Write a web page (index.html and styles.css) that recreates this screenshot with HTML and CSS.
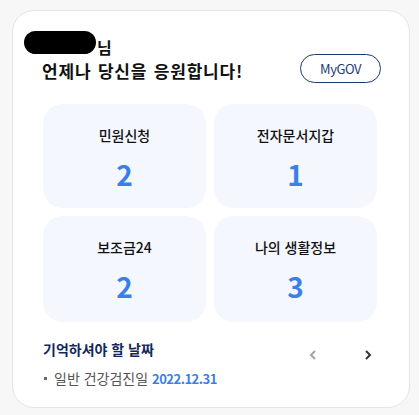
FILE: index.html
```html
<!DOCTYPE html>
<html lang="ko">
<head>
    <meta charset="UTF-8">
    <meta name="viewport" content="width=device-width, initial-scale=1.0">
    <title>나의 정부24</title>
    <link rel="stylesheet" href="styles.css">
</head>
<body>
    <div class="card">
        <!-- greeting and MyGOV link -->
        <div class="greet">
            <div class="greet-text">
                <p class="name"><span class="hidden-name"></span>님</p>
                <p class="cheer">언제나 당신을 응원합니다!</p>
            </div>
            <a class="mygov" href="#">MyGOV</a>
        </div>

        <!-- summary tiles -->
        <div class="tiles">
            <a class="tile" href="#"><span class="tile-label">민원신청</span><span class="tile-num">2</span></a>
            <a class="tile" href="#"><span class="tile-label">전자문서지갑</span><span class="tile-num">1</span></a>
            <a class="tile" href="#"><span class="tile-label">보조금24</span><span class="tile-num">2</span></a>
            <a class="tile" href="#"><span class="tile-label">나의 생활정보</span><span class="tile-num">3</span></a>
        </div>

        <!-- dates to remember -->
        <div class="remember">
            <div class="remember-text">
                <h2>기억하셔야 할 날짜</h2>
                <p class="item"><span class="dot"></span>일반 건강검진일 <b>2022.12.31</b></p>
            </div>
            <div class="arrows">
                <button class="arrow prev" type="button">
                    <svg width="8" height="10" viewBox="0 0 8 10"><path d="M6 1 L2 5 L6 9" fill="none" stroke="#a3a3a3" stroke-width="2"/></svg>
                </button>
                <button class="arrow next" type="button">
                    <svg width="8" height="10" viewBox="0 0 8 10"><path d="M2 1 L6 5 L2 9" fill="none" stroke="#333" stroke-width="2"/></svg>
                </button>
            </div>
        </div>
    </div>
</body>
</html>
```

FILE: styles.css
```css
body {
    margin: 0;
    background-color: #f7f7f8;
    font-family: "Noto Sans CJK KR", "Noto Sans", sans-serif;
    color: #111;
}
p, h2 {
    margin: 0;
}
.card {
    box-sizing: border-box;
    width: 398px;
    height: 398px;
    margin: 10px 0 0 12px;
    padding: 26px 28px 0 29px;
    background: #fff;
    border: 1px solid #e2e4ec;
    border-radius: 22px;
}
.greet {
    display: flex;
    justify-content: space-between;
    align-items: flex-end;
}
.name {
    height: 20px;
    font-size: 16px;
    font-weight: bold;
    line-height: 20px;
    margin-left: -18px;
}
.hidden-name {
    display: inline-block;
    width: 72px;
    height: 23px;
    background: #000;
    border-radius: 12px;
    vertical-align: 0;
    margin: -6px 1px 0 0;
}
.cheer {
    font-size: 17px;
    font-weight: bold;
    line-height: 24px;
    letter-spacing: 0.8px;
    word-spacing: 1px;
    margin-top: 2px;
}
.mygov {
    box-sizing: border-box;
    width: 81px;
    height: 29px;
    margin-bottom: 0;
    border: 1px solid #1d3a72;
    border-radius: 15px;
    color: #1d3a72;
    font-size: 13px;
    line-height: 27px;
    text-align: center;
    text-decoration: none;
    letter-spacing: -0.5px;
}
.tiles {
    display: grid;
    grid-template-columns: 163px 163px;
    grid-auto-rows: 104px;
    gap: 8px;
    margin: 21px 0 0 1px;
}
.tiles .tile:nth-child(n+3) {
    height: 106px;
}
.tile {
    display: flex;
    flex-direction: column;
    align-items: center;
    background: #f4f7fe;
    border-radius: 20px;
    text-decoration: none;
    color: #111;
}
.tile-label {
    margin-top: 21px;
    font-size: 14px;
    font-weight: 500;
    line-height: 20px;
}
.tile-num {
    margin-top: 12px;
    font-size: 28px;
    font-weight: bold;
    line-height: 34px;
    color: #3b7fe9;
}
.remember {
    display: flex;
    justify-content: space-between;
    margin-top: 19px;
    padding-left: 1px;
}
.remember h2 {
    font-size: 14px;
    font-weight: bold;
    line-height: 20px;
    color: #13275a;
}
.item {
    margin-top: 9px;
    font-size: 14px;
    line-height: 20px;
    color: #555;
}
.item b {
    font-size: 13px;
    letter-spacing: -0.5px;
    color: #3b7fe9;
}
.dot {
    display: inline-block;
    width: 3px;
    height: 3px;
    background: #666;
    margin: 0 7px 4px 1px;
    vertical-align: middle;
}
.arrows {
    display: flex;
    gap: 45px;
    margin-top: 9px;
    margin-right: 8px;
}
.arrow {
    width: 10px;
    height: 14px;
    padding: 0;
    border: none;
    background: none;
    cursor: pointer;
}
```
